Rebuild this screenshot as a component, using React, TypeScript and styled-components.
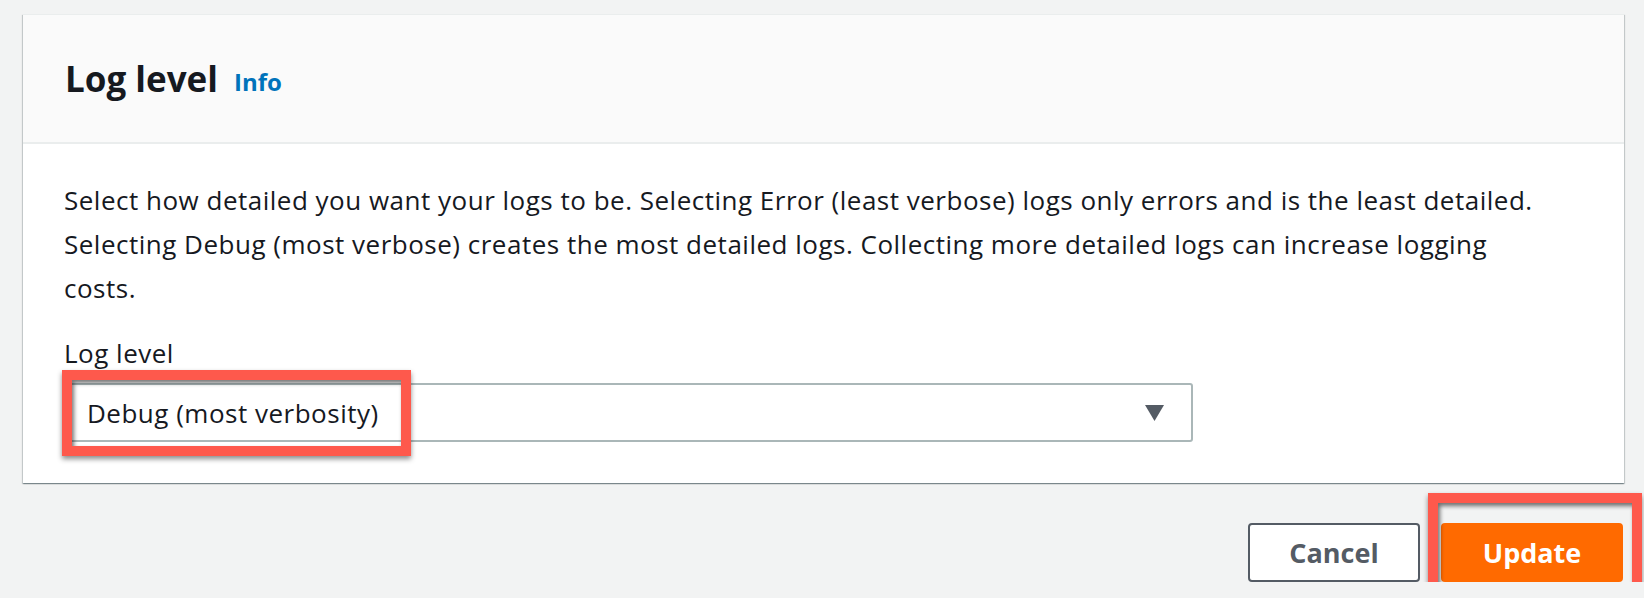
import styled, { createGlobalStyle } from "styled-components";

const GlobalStyle = createGlobalStyle`
  html, body {
    margin: 0;
    padding: 0;
    background: #f2f3f3;
    font-family: "Open Sans", "Noto Sans", Arial, sans-serif;
    color: #16191f;
  }
`;

const Page = styled.div`
  padding: 14px 20px 0 23px;
  display: flex;
  flex-direction: column;
`;

const Card = styled.section`
  background: #ffffff;
  box-shadow: 0 1px 1px 0 rgba(0, 28, 36, 0.3),
    1px 1px 1px 0 rgba(0, 28, 36, 0.15), -1px 1px 1px 0 rgba(0, 28, 36, 0.15);
  border-top: 1px solid #eaeded;
`;

const Header = styled.header`
  height: 127px;
  background: #fafafa;
  border-bottom: 2px solid #eaeded;
  display: flex;
  align-items: center;
  padding-left: 42px;
  gap: 16px;
`;

const Title = styled.h2`
  margin: 0;
  font-size: 35px;
  font-weight: 700;
  line-height: 44px;
`;

const InfoLink = styled.a`
  color: #0073bb;
  font-size: 24px;
  font-weight: 700;
  text-decoration: none;
  margin-top: 6px;
`;

const Body = styled.div`
  padding: 34px 41px 41px 41px;
  font-size: 26px;
  letter-spacing: 0.5px;
`;

const Description = styled.p`
  margin: 0;
  max-width: 1494px;
  line-height: 44px;
`;

const Field = styled.div`
  margin-top: 21px;
  display: flex;
  flex-direction: column;
  gap: 8px;
`;

const Label = styled.label`
  line-height: 44px;
`;

const SelectWrap = styled.div`
  position: relative;
  width: 1129px;
`;

const SelectBox = styled.div`
  height: 59px;
  box-sizing: border-box;
  border: 2px solid #aab7b8;
  border-radius: 3px;
  display: flex;
  align-items: center;
  justify-content: space-between;
  padding: 0 27px 0 21px;
`;

const Highlight = styled.div<{ $top: number; $left: number; $w: number; $h: number }>`
  position: absolute;
  top: ${(p) => p.$top}px;
  left: ${(p) => p.$left}px;
  width: ${(p) => p.$w}px;
  height: ${(p) => p.$h}px;
  box-sizing: border-box;
  border: 10px solid #fe594c;
  box-shadow: 0 3px 5px rgba(0, 0, 0, 0.45), inset 2px 3px 4px rgba(0, 0, 0, 0.55);
  pointer-events: none;
`;

const Footer = styled.div`
  display: flex;
  justify-content: flex-end;
  gap: 21px;
  margin-top: 40px;
  padding-right: 1px;
`;

const ButtonSlot = styled.div`
  position: relative;
`;

const Button = styled.button<{ $primary?: boolean }>`
  height: 59px;
  width: ${(p) => (p.$primary ? 182 : 172)}px;
  border-radius: 4px;
  font-family: "Open Sans", "Noto Sans", Arial, sans-serif;
  font-size: 27px;
  font-weight: 700;
  cursor: pointer;
  border: 2px solid ${(p) => (p.$primary ? "#ff6a00" : "#545b64")};
  background: ${(p) => (p.$primary ? "#ff6a00" : "#ffffff")};
  color: ${(p) => (p.$primary ? "#ffffff" : "#545b64")};
`;

const Caret = () => (
  <svg width="19" height="16" viewBox="0 0 19 16">
    <path d="M0 0 H19 L9.5 16 Z" fill="#545b64" />
  </svg>
);

export default function App() {
  return (
    <>
      <GlobalStyle />
      <Page>
        <Card>
          <Header>
            <Title>Log level</Title>
            <InfoLink href="#">Info</InfoLink>
          </Header>
          <Body>
            <Description>
              Select how detailed you want your logs to be. Selecting Error (least verbose) logs only
              errors and is the least detailed. Selecting Debug (most verbose) creates the most
              detailed logs. Collecting more detailed logs can increase logging costs.
            </Description>
            <Field>
              <Label>Log level</Label>
              <SelectWrap>
                <SelectBox>
                  <span>Debug (most verbosity)</span>
                  <Caret />
                </SelectBox>
                <Highlight $top={-13} $left={-2} $w={349} $h={86} />
              </SelectWrap>
            </Field>
          </Body>
        </Card>
        <Footer>
          <Button>Cancel</Button>
          <ButtonSlot>
            <Button $primary>Update</Button>
            <Highlight $top={-30} $left={-13} $w={214} $h={104} />
          </ButtonSlot>
        </Footer>
      </Page>
    </>
  );
}
